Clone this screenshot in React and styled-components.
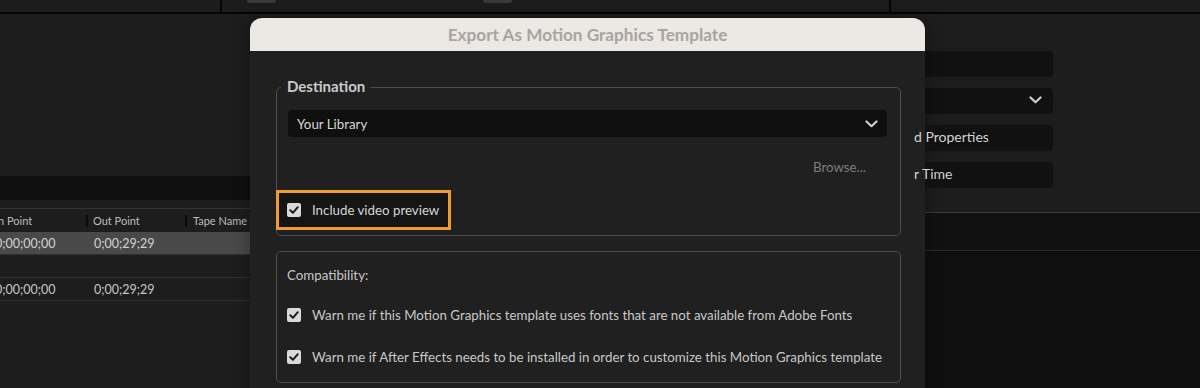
import React from 'react'
import styled, { createGlobalStyle } from 'styled-components'

const GlobalStyle = createGlobalStyle`
    html, body {
        margin: 0;
        padding: 0;
        background: #1d1d1d;
    }
    body {
        font-family: Lato, "Liberation Sans", sans-serif;
        overflow: hidden;
    }
`

const Screen = styled.div`
    position: relative;
    width: 1200px;
    height: 388px;
    overflow: hidden;
    background: #1d1d1d;
    display: flex;
    flex-direction: column;
`

/* ---------- app behind the dialog ---------- */

const TopStrip = styled.div`
    height: 12px;
    display: flex;
    background: #1c1c1c;
    border-bottom: 2px solid #050505;
`
const StripSegment = styled.div`
    width: ${props => props.width ? props.width + 'px' : 'auto'};
    flex: ${props => props.width ? 'none' : '1'};
    display: flex;
    border-right: ${props => props.last ? 'none' : '2px solid #050505'};
`
const Nub = styled.div`
    width: 29px;
    height: 3px;
    margin-left: ${props => props.offset}px;
    background: #3a3a3a;
    border-radius: 0 0 4px 4px;
`

const Workspace = styled.div`
    flex: 1;
    display: flex;
`

const LeftPanel = styled.div`
    width: 250px;
    flex: none;
    display: flex;
    flex-direction: column;
    overflow: hidden;
`
const DarkBar = styled.div`
    margin-top: 162px;
    height: 24px;
    background: #0f0f0f;
`
const Table = styled.div`
    margin-top: 8px;
    margin-left: -5px;
    display: grid;
    grid-template-columns: 91px 99px 1fr;
    border-top: 1px solid #333;
    color: #c6c6c6;
`
const HeaderCell = styled.div`
    height: 23px;
    display: flex;
    align-items: center;
    font-size: 11px;
    color: #bcbcbc;
    white-space: nowrap;
`
const HeadDivider = styled.span`
    width: 2px;
    height: 12px;
    background: #0b0b0b;
    margin-right: ${props => props.gap}px;
`
const Cell = styled.div`
    height: 22px;
    display: flex;
    align-items: center;
    padding-left: ${props => props.pad || 0}px;
    font-size: 12.5px;
    white-space: nowrap;
    background: ${props => props.selected ? '#494949' : 'transparent'};
    color: ${props => props.selected ? '#d2d2d2' : '#c6c6c6'};
    border-bottom: 1px solid #313131;
`

const Middle = styled.div`
    width: 675px;
    flex: none;
`

const RightPanel = styled.div`
    flex: 1;
    display: flex;
    flex-direction: column;
    padding-top: 37px;
`
const FieldList = styled.div`
    display: flex;
    flex-direction: column;
    gap: 11px;
`
const Field = styled.div`
    width: 128px;
    height: 26px;
    box-sizing: border-box;
    background: #111;
    border-radius: 0 4px 4px 0;
    display: flex;
    align-items: center;
    justify-content: space-between;
    padding: 0 11px 3px 0;
    font-size: 14px;
    color: #d3d3d3;
    white-space: nowrap;
    position: ${props => props.spill ? 'relative' : 'static'};
    z-index: ${props => props.spill ? 3 : 'auto'};
    text-indent: ${props => props.spill ? '-11px' : '0'};
`
const LowerPanel = styled.div`
    margin-top: 24px;
    flex: 1;
    display: flex;
    flex-direction: column;
    border-top: 1px solid #3a3a3a;
    background: #0f0f0f;
`
const TrackBar = styled.div`
    height: 37px;
    background: #111;
    border-bottom: 1px solid #2c2c2c;
`

/* ---------- dialog ---------- */

const Dialog = styled.div`
    position: absolute;
    left: 250px;
    top: 18px;
    width: 675px;
    height: 390px;
    z-index: 2;
    display: flex;
    flex-direction: column;
    border-radius: 12px 12px 0 0;
    overflow: hidden;
    background: #202020;
    box-shadow: 0 0 18px rgba(0, 0, 0, 0.35);
`
const TitleBar = styled.div`
    height: 33px;
    flex: none;
    display: flex;
    align-items: center;
    justify-content: center;
    padding-bottom: 1px;
    box-sizing: border-box;
    background: #ece8e4;
    color: #a8a4a1;
    font-size: 17.2px;
    font-weight: 700;
`
const DialogBody = styled.div`
    padding: 26px 24px 0 26px;
    display: flex;
    flex-direction: column;
    font-size: 13.3px;
    color: #d2d2d2;
`
const Group = styled.fieldset`
    margin: 0;
    min-inline-size: 0;
    padding: 0 13px 5px 11px;
    border: 1px solid #4e4e4e;
    border-radius: 5px;
`
const Legend = styled.legend`
    margin-left: -7px;
    padding: 0 5px 2px 6px;
    line-height: 18px;
    font-size: 15px;
    font-weight: 700;
    color: #cacaca;
`
const GroupContent = styled.div`
    display: flex;
    flex-direction: column;
`
const Select = styled.div`
    margin-top: 13px;
    height: 27px;
    display: flex;
    align-items: center;
    justify-content: space-between;
    padding: 0 9px;
    background: #0f0f0f;
    border-radius: 4px;
    color: #d6d6d6;
`
const BrowseRow = styled.div`
    margin-top: 21px;
    line-height: 18px;
    display: flex;
    justify-content: flex-end;
    padding-right: 21px;
    color: #7d7d7d;
`
const Highlight = styled.div`
    margin-top: 14px;
    margin-left: -12px;
    align-self: flex-start;
    height: 40px;
    box-sizing: border-box;
    display: flex;
    align-items: center;
    gap: 11px;
    padding: 0 9px 0 8px;
    background: #151515;
    border: 3px solid #ee9b30;
`
const Box = styled.div`
    margin-top: 15px;
    border: 1px solid #4e4e4e;
    border-radius: 5px;
    padding: 14px 11px 16px 10px;
    display: flex;
    flex-direction: column;
    color: #c8c8c8;
`
const BoxLabel = styled.div`
    line-height: 18px;
`
const CheckRow = styled.label`
    margin-top: ${props => props.gap}px;
    display: flex;
    align-items: center;
    gap: 11px;
    line-height: 18px;
    white-space: nowrap;
    color: ${props => props.bright ? '#d6d6d6' : '#c8c8c8'};
`
const CheckBoxShape = styled.span`
    width: 14px;
    height: 14px;
    flex: none;
    display: flex;
    align-items: center;
    justify-content: center;
    background: #d9d9d9;
    border-radius: 2px;
`

const Chevron = ({ color = '#d0d0d0' }) => (
    <svg width="13" height="8" viewBox="0 0 13 8">
        <polyline points="1.5,1.5 6.5,6.2 11.5,1.5" fill="none" stroke={color} strokeWidth="2.2" strokeLinecap="round" strokeLinejoin="round" />
    </svg>
)

const Checkbox = () => (
    <CheckBoxShape>
        <svg width="12" height="12" viewBox="0 0 12 12">
            <polyline points="2.3,6.3 4.9,8.8 9.8,3.2" fill="none" stroke="#1b1b1b" strokeWidth="2" strokeLinecap="round" strokeLinejoin="round" />
        </svg>
    </CheckBoxShape>
)

const rows = [
    { inPoint: '0;00;00;00', outPoint: '0;00;29;29', selected: true },
    { inPoint: '', outPoint: '' },
    { inPoint: '0;00;00;00', outPoint: '0;00;29;29' },
]

const App = () => {
    return (
        <Screen>
            <GlobalStyle />
            <TopStrip>
                <StripSegment width={220} />
                <StripSegment width={667}>
                    <Nub offset={25} />
                    <Nub offset={207} />
                </StripSegment>
                <StripSegment last />
            </TopStrip>

            <Workspace>
                <LeftPanel>
                    <DarkBar />
                    <Table>
                        <HeaderCell>In Point</HeaderCell>
                        <HeaderCell><HeadDivider gap={5} />Out Point</HeaderCell>
                        <HeaderCell><HeadDivider gap={6} />Tape Name</HeaderCell>
                        {rows.map((row, i) => (
                            <React.Fragment key={i}>
                                <Cell selected={row.selected}>{row.inPoint}</Cell>
                                <Cell selected={row.selected} pad={8}>{row.outPoint}</Cell>
                                <Cell selected={row.selected} />
                            </React.Fragment>
                        ))}
                    </Table>
                </LeftPanel>

                <Middle />

                <RightPanel>
                    <FieldList>
                        <Field />
                        <Field><span /><Chevron /></Field>
                        <Field spill>d Properties</Field>
                        <Field spill>r Time</Field>
                    </FieldList>
                    <LowerPanel>
                        <TrackBar />
                    </LowerPanel>
                </RightPanel>
            </Workspace>

            <Dialog>
                <TitleBar>Export As Motion Graphics Template</TitleBar>
                <DialogBody>
                    <Group>
                        <Legend>Destination</Legend>
                        <GroupContent>
                            <Select>
                                <span>Your Library</span>
                                <Chevron />
                            </Select>
                            <BrowseRow>Browse...</BrowseRow>
                            <Highlight>
                                <Checkbox />
                                <CheckRow gap={0} bright>Include video preview</CheckRow>
                            </Highlight>
                        </GroupContent>
                    </Group>

                    <Box>
                        <BoxLabel>Compatibility:</BoxLabel>
                        <CheckRow gap={22}>
                            <Checkbox />
                            Warn me if this Motion Graphics template uses fonts that are not available from Adobe Fonts
                        </CheckRow>
                        <CheckRow gap={24}>
                            <Checkbox />
                            Warn me if After Effects needs to be installed in order to customize this Motion Graphics template
                        </CheckRow>
                    </Box>
                </DialogBody>
            </Dialog>
        </Screen>
    )
}

export default App
